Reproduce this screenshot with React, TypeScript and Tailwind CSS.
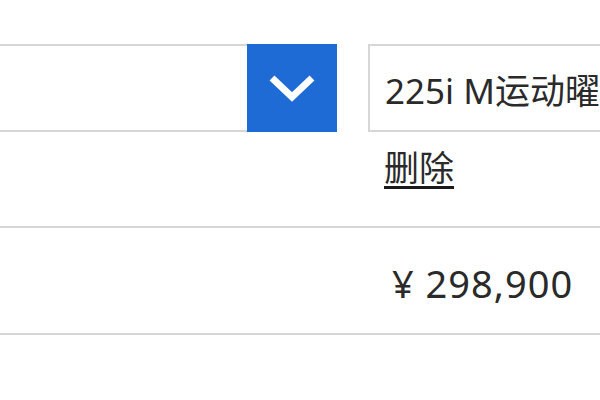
export default function App() {
  return (
    <div className="w-[600px] h-[400px] overflow-hidden bg-white text-[#2a2a2a] font-['Noto_Sans','Noto_Sans_CJK_SC',sans-serif]">
      {/* Selectors */}
      <div className="flex pt-[44px] h-[226px]">
        <div className="flex w-[337px] h-[88px] shrink-0 border-y-2 border-[#d6d6d6]">
          <div className="flex-1" />
          <button className="w-[90px] -my-[2px] bg-[#1e6bd6] flex items-center justify-center">
            <svg width="46" height="32" viewBox="0 0 46 32" fill="none">
              <path d="M3 6 L23 25 L43 6" stroke="white" strokeWidth="7" strokeLinejoin="miter" />
            </svg>
          </button>
        </div>
        <div className="ml-[31px] flex-1 flex flex-col">
          <div className="h-[88px] w-[260px] border-2 border-r-0 border-[#d6d6d6] flex items-center pl-[15px] whitespace-nowrap overflow-hidden">
            <span className="text-[35px] leading-none pt-[4px]">225i M运动曜夜版</span>
          </div>
          <div className="pl-[16px] pt-[18px]">
            <span className="inline-block text-[35px] leading-[36px] border-b-[3px] border-[#1a1a1a]">删除</span>
          </div>
        </div>
      </div>
      {/* Price row */}
      <div className="border-y-2 border-[#d6d6d6] h-[109px] flex items-center">
        <div className="ml-[392px] text-[38px] leading-none tracking-[1px] pt-[4px]">¥ 298,900</div>
      </div>
    </div>
  );
}
